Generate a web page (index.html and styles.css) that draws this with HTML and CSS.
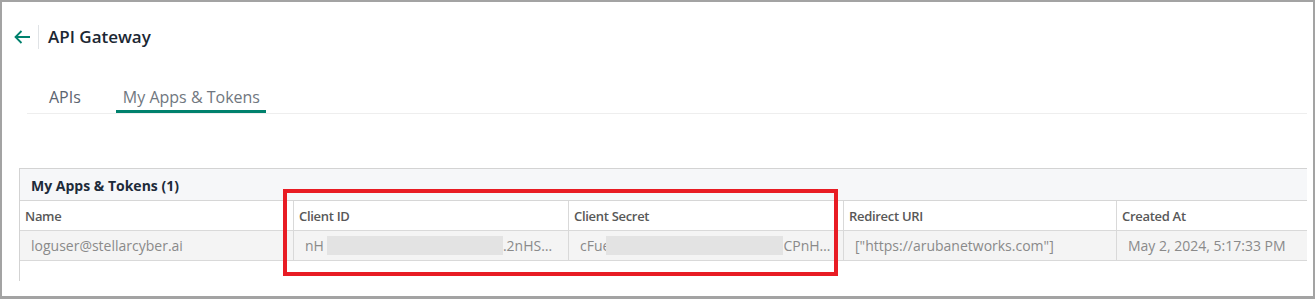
FILE: index.html
```html
<!DOCTYPE html>
<html lang="en">
<head>
  <meta charset="UTF-8">
  <title>API Gateway</title>
  <link rel="stylesheet" href="styles.css">
</head>
<body>
  <div class="frame">
    <header class="topbar">
      <a class="back" href="#">
        <svg width="16" height="14" viewBox="0 0 16 14"><path d="M16 7H1.5M7.5 1L1.5 7l6 6" fill="none" stroke="#00816d" stroke-width="1.8"/></svg>
      </a>
      <span class="sep"></span>
      <h1>API Gateway</h1>
    </header>
    <nav class="tabs">
      <div class="tab">APIs</div>
      <div class="tab active">My Apps &amp; Tokens</div>
    </nav>
    <div class="panel">
      <div class="band">My Apps &amp; Tokens (1)</div>
      <div class="grid">
        <div class="th">Name</div>
        <div class="th">Client ID</div>
        <div class="th">Client Secret</div>
        <div class="th">Redirect URI</div>
        <div class="th">Created At</div>
        <div class="td">loguser@stellarcyber.ai</div>
        <div class="td">nH<span class="mask m1"></span>.2nHS…</div>
        <div class="td">cFue<span class="mask m2"></span>CPnH…</div>
        <div class="td">["https://arubanetworks.com"]</div>
        <div class="td">May 2, 2024, 5:17:33 PM</div>
      </div>
      <div class="rest"></div>
    </div>
    <div class="highlight"></div>
  </div>
</body>
</html>
```

FILE: styles.css
```css
body { margin: 0; background: #fff; font-family: "Open Sans", sans-serif; }
.frame { position: relative; width: 1315px; height: 299px; box-sizing: border-box; border: 2px solid #a3a3a3; border-bottom-width: 3px; overflow: hidden; }

.topbar { display: flex; align-items: center; height: 24px; margin-top: 23px; padding-left: 12px; }
.back { display: flex; width: 16px; height: 14px; }
.sep { width: 1px; height: 24px; background: #e0e3e6; margin-left: 8px; }
.topbar h1 { margin: 0 0 0 9px; font-size: 17px; font-weight: 600; color: #1b2733; line-height: 24px; }

.tabs { display: flex; margin: 37px 6px 0 25px; border-bottom: 1px solid #eeeeee; }
.tab { font-size: 16px; line-height: 22px; padding: 0 6px 2px 7px; border-bottom: 3px solid transparent; color: #5b6470; margin-right: 29px; }
.tab:first-child { margin-left: 15px; }
.tab.active { border-bottom-color: #00816d; color: #707780; }

.panel { margin: 54px 6px 0 17px; border-top: 1px solid #d3d3d3; border-left: 1px solid #d3d3d3; }
.band { height: 32px; box-sizing: border-box; padding: 2px 0 0 11px; line-height: 30px; background: #f6f7f9; border-bottom: 1px solid #d6d6d6; font-size: 14px; font-weight: 700; color: #1d2b3a; }
.grid { display: grid; grid-template-columns: 274px 275px 275px 273px 1fr; }
.th, .td { box-sizing: border-box; height: 30px; display: flex; align-items: center; border-bottom: 1px solid #d9d9d9; border-right: 1px solid #d9d9d9; white-space: nowrap; overflow: hidden; }
.th:nth-child(5n), .td:nth-child(5n) { border-right: none; }
.th { padding-left: 5px; font-size: 13px; font-weight: 600; color: #585858; letter-spacing: -0.3px; }
.td { padding-left: 11px; font-size: 14px; color: #8a8a8a; background: #f4f4f4; }
.mask { display: inline-block; height: 19px; background: #e3e3e3; }
.m1 { width: 176px; margin-left: 3px; }
.m2 { width: 177px; margin-left: -4px; }
.rest { height: 20px; }

.highlight { position: absolute; left: 281px; top: 187px; width: 555px; height: 87px; box-sizing: border-box; border: 4.5px solid #e81c24; }
```
